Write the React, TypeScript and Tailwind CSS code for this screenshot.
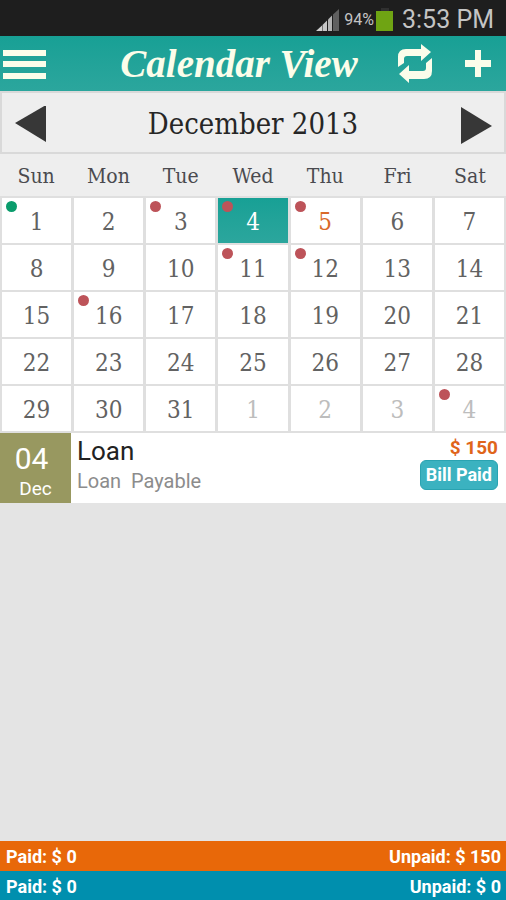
const serif = "font-['DejaVu_Serif_Condensed','Noto_Serif','DejaVu_Serif',serif]";

type Day = { n: number; dot?: "red" | "green"; muted?: boolean; state?: "selected" | "today" };

const dots: Record<number, "red" | "green"> = {
  1: "green",
  3: "red",
  4: "red",
  5: "red",
  11: "red",
  12: "red",
  16: "red",
  35: "red",
};

const days: Day[] = Array.from({ length: 35 }, (_, i) => ({
  n: i < 31 ? i + 1 : i - 30,
  dot: dots[i + 1],
  muted: i >= 31,
  state: i === 3 ? "selected" : i === 4 ? "today" : undefined,
}));

const weeks = [0, 1, 2, 3, 4].map((w) => days.slice(w * 7, w * 7 + 7));

function tone(day: Day) {
  if (day.state === "selected") return "bg-linear-to-b from-[#17a095] to-[#2ba69d] text-white";
  if (day.state === "today") return "bg-white text-[#d9692a]";
  return day.muted ? "bg-white text-[#bdbdbd]" : "bg-white text-[#626262]";
}

function StatusBar() {
  return (
    <div className="flex h-9 items-center justify-end bg-[#1e1e1e] pt-1 pr-3 text-[#c4c4c4]">
      <svg className="mr-1 h-6 w-6" viewBox="0 0 24 24" aria-hidden="true">
        <path d="M0 23 6 17.500V23Z" fill="#d0d0d0" />
        <path d="M6.500 23V17L11 12.500V23Z" fill="#c6c6c6" />
        <path d="M12 23V11.500L16 7.500V23Z" fill="#b5b5b5" />
        <path d="M17 23V6.500L23 1V23Z" fill="#606060" />
      </svg>
      <span className="text-base">94%</span>
      <svg className="mr-2 ml-0.5 h-6 w-[18px]" viewBox="0 0 18 24" aria-hidden="true">
        <path d="M5 0h8v3H5z" fill="#303030" />
        <path d="M0 3h17v20H0z" fill="#6fa413" />
      </svg>
      <span className="text-[25px]">3:53 PM</span>
    </div>
  );
}

function Header() {
  return (
    <header className="grid h-[55px] grid-cols-[96px_1fr_124px] items-center bg-linear-to-b from-[#17a095] to-[#2ba69d]">
      <button aria-label="Menu" className="ml-[3px] w-11">
        <svg className="h-[30px] w-11" viewBox="0 0 44 30" fill="#fbfdea">
          <path d="M0 1h43v6H0zM0 12h43v6H0zM0 24h43v6H0z" />
        </svg>
      </button>
      <h1 className="text-center font-['Liberation_Serif',serif] text-[39px] leading-none font-bold whitespace-nowrap text-[#fbfdea] italic">
        Calendar View
      </h1>
      <div className="flex items-center justify-between pr-[14px] pl-[14px]">
        <button aria-label="Refresh">
          <svg className="h-[42px] w-[36px]" viewBox="0 0 36 42" fill="#fbfdea">
            <path d="M2 24V14q0-8 8-8h15V1l10 8-10 9v-5H11q-3 0-3 3v4Z" />
            <path d="M36 15v13q0 8-8 8H13v4L3 31l10-9v6h14q3 0 3-3v-5Z" />
          </svg>
        </button>
        <button aria-label="Add bill">
          <svg className="h-7 w-7" viewBox="0 0 28 28" fill="#fbfdea">
            <path d="M11 0h6v10h10v7H17v10h-6V17H1v-7h10z" />
          </svg>
        </button>
      </div>
    </header>
  );
}

function MonthBar() {
  return (
    <div className="flex h-[63px] items-center justify-between border-2 border-[#d9d9d9] bg-[#eeeeee] px-3 pt-1">
      <button aria-label="Previous month">
        <svg className="h-[38px] w-8" viewBox="0 0 32 38" fill="#373737">
          <path d="M1 17 32-1v37z" />
        </svg>
      </button>
      <h2 className={`${serif} text-[29px] text-[#262626]`}>December 2013</h2>
      <button aria-label="Next month">
        <svg className="h-[38px] w-8" viewBox="0 0 32 38" fill="#373737">
          <path d="M32 20 1 1v37z" />
        </svg>
      </button>
    </div>
  );
}

function Calendar() {
  return (
    <table className={`block ${serif}`}>
      <thead className="block bg-[#eeeeee]">
        <tr className="grid h-[42px] grid-cols-7 items-center pt-1">
          {["Sun", "Mon", "Tue", "Wed", "Thu", "Fri", "Sat"].map((d) => (
            <th key={d} className="text-[21px] font-normal text-[#4a4a4f]">
              {d}
            </th>
          ))}
        </tr>
      </thead>
      <tbody className="grid gap-[2px] bg-[#dfdfdf] p-[2px]">
        {weeks.map((week, w) => (
          <tr key={w} className="grid grid-cols-7 gap-[3px]">
            {week.map((day, i) => (
              <td key={i} className="relative">
                <button className={`h-[45px] w-full pt-0.5 text-2xl ${tone(day)}`}>{day.n}</button>
                {day.dot && (
                  <span
                    className={`absolute top-[3px] left-1 h-[11px] w-[11px] rounded-full ${
                      day.dot === "green" ? "bg-[#0a9c6c]" : "bg-[#bd5359]"
                    }`}
                  />
                )}
              </td>
            ))}
          </tr>
        ))}
      </tbody>
    </table>
  );
}

function Bill() {
  return (
    <article className="flex h-[70px] bg-white">
      <div className="w-[71px] bg-[#989860] pt-2 text-white">
        <p className="pr-2 text-center text-[30px] leading-9">04</p>
        <p className="text-center text-[19px] leading-6">Dec</p>
      </div>
      <div className="flex-1 pt-1 pl-[6px]">
        <h3 className="text-[26px] leading-7 text-[#222222]">Loan</h3>
        <p className="text-[20px] leading-8 whitespace-pre text-[#8c8c8c]">Loan  Payable</p>
      </div>
      <div className="flex flex-col items-end pt-[3px] pr-2">
        <p className="text-[19px] leading-6 font-bold text-[#e0651a]">$ 150</p>
        <button className="h-[30px] rounded-md border border-[#2aa3b1] bg-[#3bb2c0] px-[5px] text-[18px] leading-7 font-bold text-white">
          Bill Paid
        </button>
      </div>
    </article>
  );
}

export default function App() {
  return (
    <div className="flex min-h-screen flex-col bg-[#e4e4e4] font-['Roboto',sans-serif]">
      <StatusBar />
      <Header />
      <main className="flex-1">
        <MonthBar />
        <Calendar />
        <Bill />
      </main>
      <footer className="text-[18px] leading-8 font-bold text-white">
        <div className="flex h-[30px] justify-between bg-[#e86809] pr-[5px] pl-[6px]">
          <span>Paid: $ 0</span>
          <span>Unpaid: $ 150</span>
        </div>
        <div className="flex h-[29px] justify-between overflow-hidden bg-[#008fae] pr-[5px] pl-[6px]">
          <span>Paid: $ 0</span>
          <span>Unpaid: $ 0</span>
        </div>
      </footer>
    </div>
  );
}
